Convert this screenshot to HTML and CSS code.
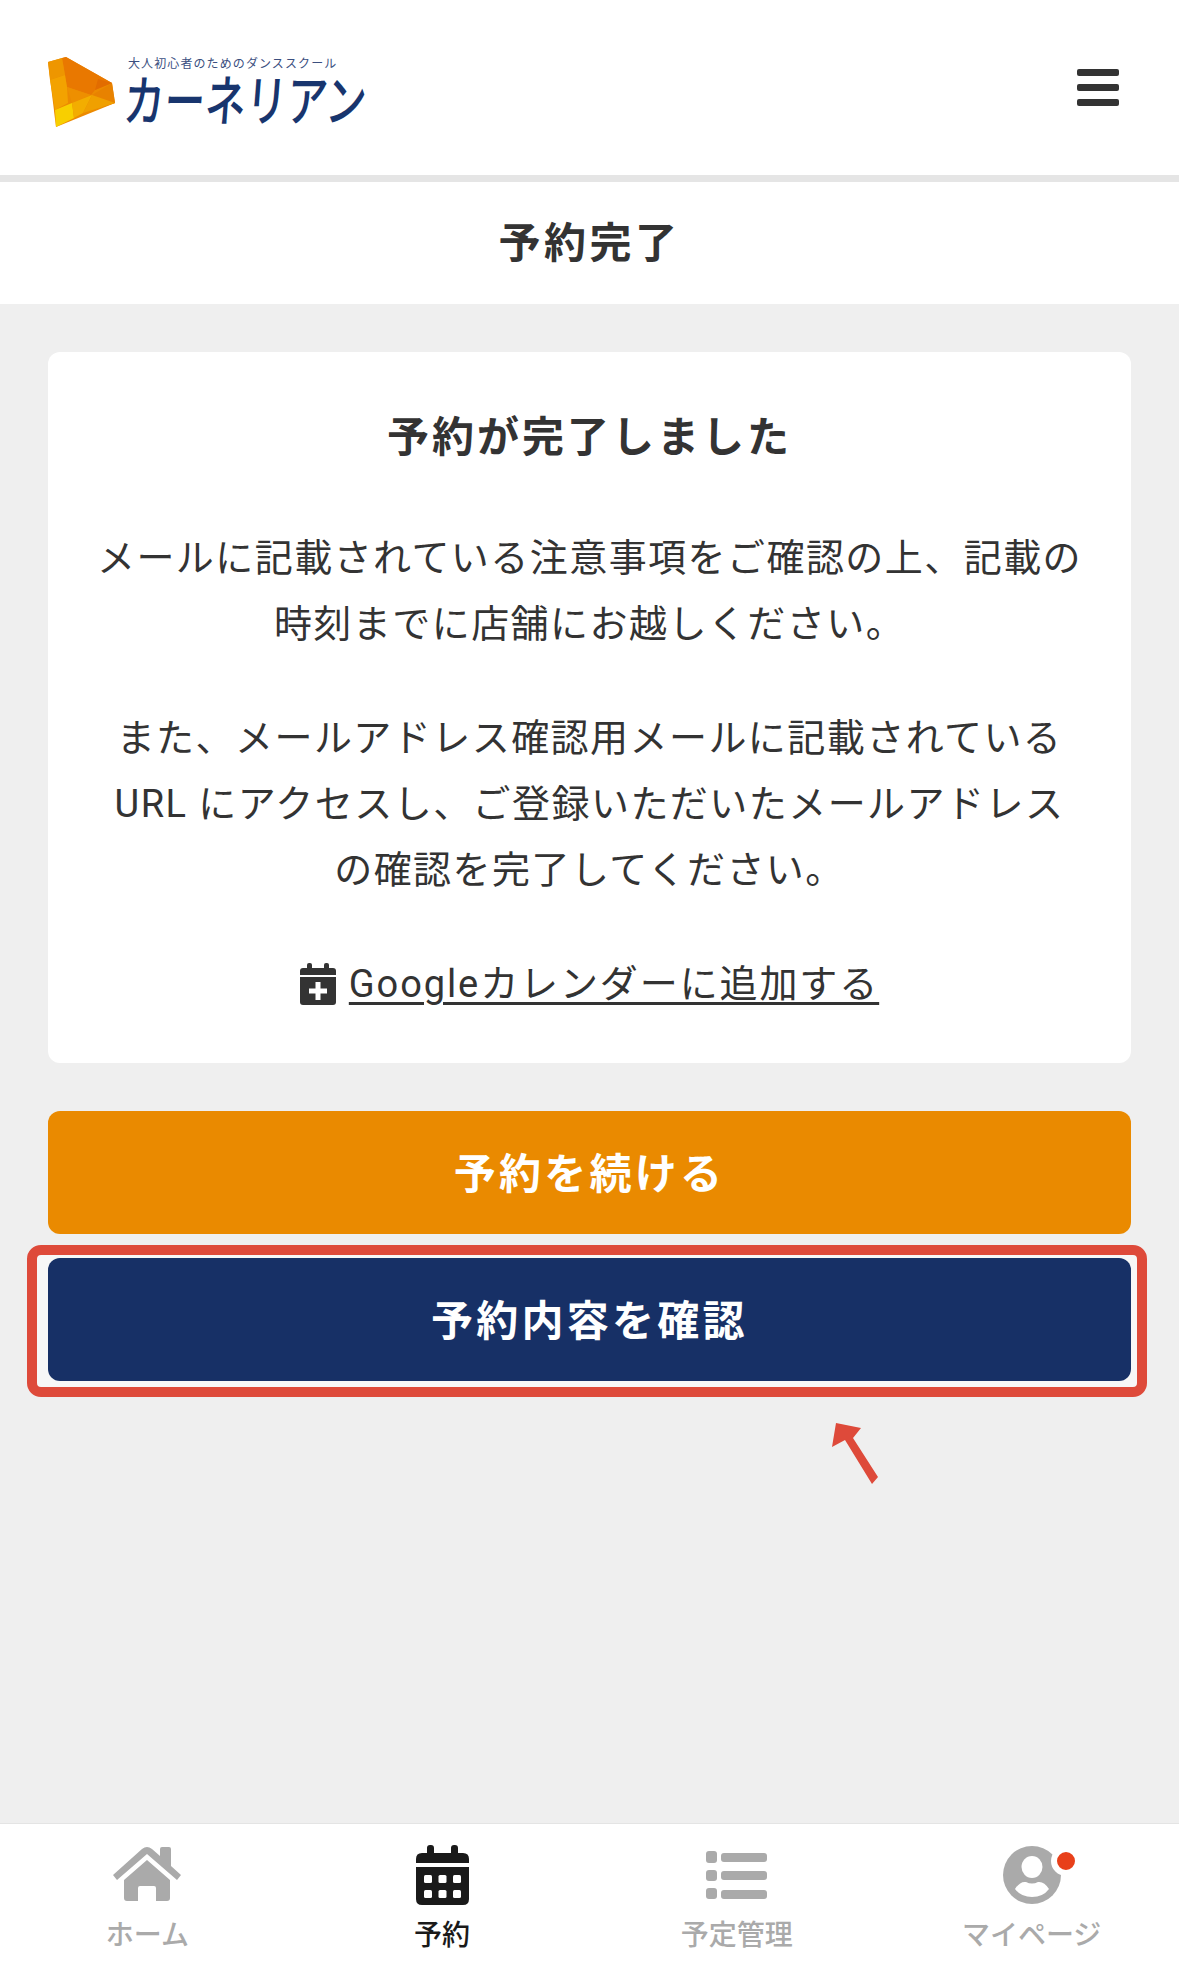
FILE: index.html

```html
<!DOCTYPE html>
<html lang="ja">
<head>
  <meta charset="UTF-8">
  <title>予約完了</title>
  <link rel="stylesheet" href="styles.css">
</head>
<body>

  <header class="header">
    <a class="logo" href="#">
      <svg class="logo-mark" width="67" height="70" viewBox="48 57 67 70">
        <polygon fill="#ec8a00" points="48,62 66,57 112,83 115,103 56,127"/>
        <polygon fill="#e97800" points="62,58 66,57 112,83 95,90 91,95 67,87"/>
        <polygon fill="#e26c00" points="98,79 112,83 95,90"/>
        <polygon fill="#e88200" points="92,95 112,83 115,103 103,107"/>
        <polygon fill="#ee9600" points="48,62 62,58 65,75 50,80"/>
        <polygon fill="#f3a200" points="50,80 65,75 67,87 68,103 55,110"/>
        <polygon fill="#ee8f00" points="67,87 91,95 72,103"/>
        <polygon fill="#f8cf00" points="55,110 72,103 74,118 56,127"/>
        <polygon fill="#f3ad00" points="72,103 92,95 83,113 74,118"/>
        <polygon fill="#f0a000" points="92,95 115,103 83,113"/>
      </svg>
      <div class="logo-text">
        <span class="logo-sub">大人初心者のためのダンススクール</span>
        <span class="logo-name">カーネリアン</span>
      </div>
    </a>
    <button class="menu-btn" aria-label="メニュー">
      <span></span><span></span><span></span>
    </button>
  </header>

  <div class="title-bar"><h1>予約完了</h1></div>

  <main class="content">
    <section class="card">
      <h2>予約が完了しました</h2>
      <p>メールに記載されている注意事項をご確認の上、記載の<br>時刻までに店舗にお越しください。</p>
      <p>また、メールアドレス確認用メールに記載されている<br>URL にアクセスし、ご登録いただいたメールアドレス<br>の確認を完了してください。</p>
      <div class="cal-row">
        <svg class="cal-icon" width="36" height="42" viewBox="0 0 36 42">
          <rect x="7" y="0" width="5" height="8" rx="2" fill="#333"/>
          <rect x="24" y="0" width="5" height="8" rx="2" fill="#333"/>
          <path d="M3 5H33A3 3 0 0 1 36 8V12H0V8A3 3 0 0 1 3 5Z" fill="#333"/>
          <path d="M0 14H36V39A3 3 0 0 1 33 42H3A3 3 0 0 1 0 39Z" fill="#333"/>
          <path d="M15.5 19H20.5V25.5H27V30.5H20.5V37H15.5V30.5H9V25.5H15.5Z" fill="#fff"/>
        </svg>
        <a class="cal-link" href="#">Googleカレンダーに追加する</a>
      </div>
    </section>

    <a class="btn btn-orange" href="#">予約を続ける</a>
    <a class="btn btn-navy" href="#">予約内容を確認</a>
  </main>

  <nav class="tabbar">
    <a class="tab" href="#">
      <svg width="68" height="60" viewBox="0 0 68 60">
        <path d="M0 30 L29 4 Q34 0 39 4 L47 11 V4 Q47 2 49 2 H56 Q58 2 58 4 V21 L68 30 L64 35 L34 9 L4 35 Z" fill="#aaa"/>
        <path d="M34 15 L57 35 V53 Q57 56 54 56 H43 V43 Q43 41 41 41 H27 Q25 41 25 43 V56 H14 Q11 56 11 53 V35 Z" fill="#aaa"/>
      </svg>
      <span>ホーム</span>
    </a>
    <a class="tab active" href="#">
      <svg width="53" height="60" viewBox="0 0 53 60">
        <path d="M11 3 Q11 0 14 0 H15 Q18 0 18 3 V8 H35 V3 Q35 0 38 0 H39 Q42 0 42 3 V8 H47 Q53 8 53 14 V18 H0 V14 Q0 8 6 8 H11 Z" fill="#1a1a1a"/>
        <path d="M0 22 H53 V54 Q53 60 47 60 H6 Q0 60 0 54 Z" fill="#1a1a1a"/>
        <g fill="#fff">
          <rect x="8" y="30" width="8" height="8" rx="1.5"/>
          <rect x="22.500" y="30" width="8" height="8" rx="1.5"/>
          <rect x="37" y="30" width="8" height="8" rx="1.5"/>
          <rect x="8" y="45" width="8" height="8" rx="1.5"/>
          <rect x="22.500" y="45" width="8" height="8" rx="1.5"/>
          <rect x="37" y="45" width="8" height="8" rx="1.5"/>
        </g>
      </svg>
      <span>予約</span>
    </a>
    <a class="tab" href="#">
      <svg width="61" height="60" viewBox="0 0 61 60">
        <g fill="#aaa">
          <rect x="0" y="6" width="11" height="12" rx="3"/>
          <rect x="15" y="8" width="46" height="9" rx="3"/>
          <rect x="0" y="25" width="11" height="11" rx="3"/>
          <rect x="15" y="26" width="46" height="9" rx="3"/>
          <rect x="0" y="43" width="11" height="11" rx="3"/>
          <rect x="15" y="45" width="46" height="9" rx="3"/>
        </g>
      </svg>
      <span>予定管理</span>
    </a>
    <a class="tab" href="#">
      <span class="user-icon">
        <svg width="58" height="60" viewBox="0 0 58 60">
          <ellipse cx="29" cy="30" rx="29" ry="29" fill="#aaa"/>
          <ellipse cx="29" cy="22" rx="10.500" ry="11" fill="#fff"/>
          <path d="M12 44 Q17 36 23 37 Q29 40 35 37 Q41 36 46 44 Q40 52 29 52 Q18 52 12 44 Z" fill="#fff"/>
        </svg>
        <i class="badge"></i>
      </span>
      <span>マイページ</span>
    </a>
  </nav>

  <!-- annotation over the screenshot -->
  <div class="highlight"></div>
  <svg class="arrow" width="50" height="64" viewBox="830 1422 50 64">
    <polygon fill="#de4a3a" points="836,1423 861,1428 853,1438 878,1477 872,1484 845,1440 832,1447"/>
  </svg>

</body>
</html>
```

FILE: styles.css

```css
* { box-sizing: border-box; }
html, body { margin: 0; padding: 0; }
body {
  position: relative;
  display: flex;
  flex-direction: column;
  height: 1977px;
  background: #efefef;
  color: #333;
  font-family: Roboto, "Noto Sans CJK JP", sans-serif;
}
a { color: inherit; text-decoration: none; }

.header {
  display: flex;
  justify-content: space-between;
  align-items: flex-start;
  height: 182px;
  padding: 57px 60px 0 48px;
  background: #fff;
  border-bottom: 7px solid #e5e5e5;
}
.logo { display: flex; align-items: flex-start; gap: 13px; }
.logo-text { display: flex; flex-direction: column; margin-top: -1px; }
.logo-sub {
  font-size: 12px;
  line-height: 14px;
  letter-spacing: 1.100px;
  color: #3b4f7f;
  margin-top: 1px;
  white-space: nowrap;
}
.logo-name {
  width: 320px;
  font-size: 55px;
  line-height: 56px;
  font-weight: 500;
  color: #18356e;
  white-space: nowrap;
  transform: scaleX(.74) skewX(-6deg);
  transform-origin: left top;
  margin-top: 3px;
  margin-left: -2px;
}
.menu-btn {
  display: flex;
  flex-direction: column;
  gap: 8px;
  width: 42px;
  margin-top: 12px;
  padding: 0;
  background: none;
  border: none;
}
.menu-btn span { height: 7px; background: #333; border-radius: 2px; }

.title-bar {
  display: flex;
  justify-content: center;
  align-items: center;
  height: 122px;
  padding-top: 2px;
  background: #fff;
}
.title-bar h1 {
  margin: 0;
  font-size: 42px;
  line-height: 60px;
  letter-spacing: 3.500px;
  font-weight: 700;
}

.content {
  flex: 1;
  padding: 48px;
}
.card {
  margin-bottom: 48px;
  padding: 56px 0 46px;
  background: #fff;
  border-radius: 12px;
  text-align: center;
}
.card h2 {
  margin: 0 0 57px;
  font-size: 42px;
  line-height: 60px;
  letter-spacing: 3px;
  font-weight: 700;
}
.card p {
  margin: 0 0 48px;
  font-size: 38px;
  line-height: 66px;
  letter-spacing: 1.450px;
}
.cal-row {
  display: flex;
  justify-content: center;
  align-items: center;
  gap: 13px;
  height: 66px;
}
.cal-link {
  font-size: 38px;
  line-height: 66px;
  letter-spacing: 1.900px;
  text-decoration: underline;
  text-decoration-thickness: 3px;
  text-underline-offset: 5px;
}

.btn {
  display: flex;
  justify-content: center;
  align-items: center;
  position: relative;
  z-index: 2;
  height: 123px;
  padding-bottom: 4px;
  border-radius: 12px;
  color: #fff;
  font-size: 42px;
  font-weight: 700;
  letter-spacing: 3.250px;
}
.btn-orange { background: #ea8a00; margin-bottom: 24px; }
.btn-navy { background: #173066; }

.tabbar {
  display: grid;
  grid-template-columns: repeat(4, 1fr);
  height: 154px;
  padding-top: 21px;
  background: #fff;
  border-top: 1px solid #e4e4e4;
}
.tab {
  display: flex;
  flex-direction: column;
  align-items: center;
  gap: 15px;
  color: #aaa;
  font-size: 28px;
  line-height: 32px;
  font-weight: 500;
}
.tab svg { display: block; }
.tab.active { color: #1a1a1a; }
.user-icon { position: relative; display: block; height: 60px; }
.badge {
  position: absolute;
  left: 48px;
  top: 1px;
  width: 30px;
  height: 30px;
  background: #e8401a;
  border: 6px solid #fff;
  border-radius: 50%;
}

.highlight {
  position: absolute;
  left: 27px;
  top: 1245px;
  width: 1120px;
  height: 152px;
  z-index: 1;
  background: #f7f7f7;
  border: 10px solid #de4a3a;
  border-radius: 14px;
}
.arrow {
  position: absolute;
  left: 830px;
  top: 1422px;
}
```
